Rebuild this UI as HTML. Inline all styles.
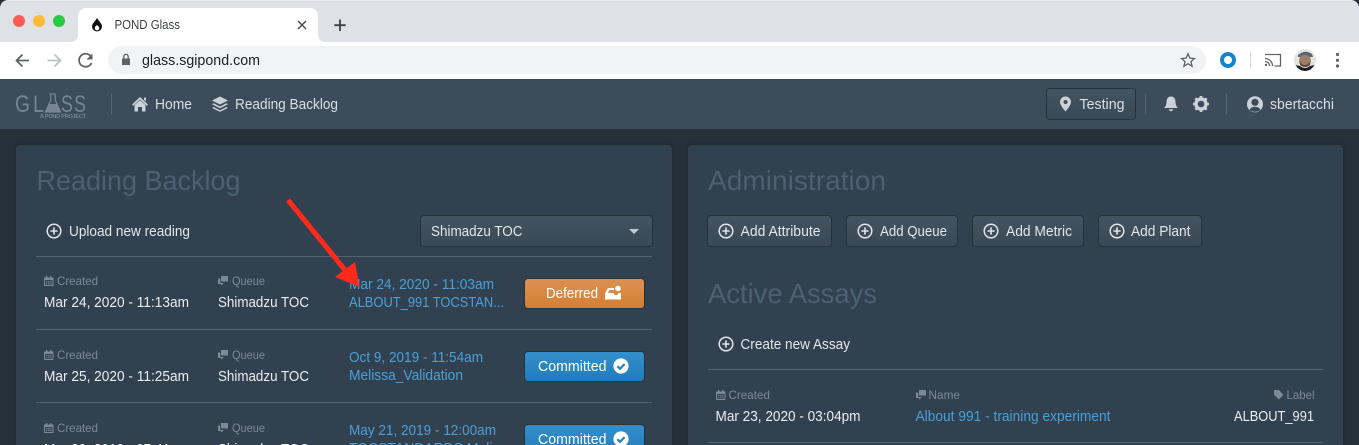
<!DOCTYPE html>
<html><head><meta charset="utf-8"><title>POND Glass</title>
<style>
html,body{margin:0;padding:0;width:1359px;height:445px;overflow:hidden;background:#27313a}
#page{position:relative;width:1359px;height:445px;overflow:hidden;background:#27313a}
#page div{position:absolute;box-sizing:border-box}
svg{position:absolute;left:0;top:0}
text{font-family:"Liberation Sans",sans-serif;font-size:14.3px}
.n{fill:#d9dfe3}.w{fill:#e9edf0}.l{fill:#7d8a95;font-size:12px}.a{fill:#4a9fd8}
.h{fill:#4a6073;font-size:28px}.b{fill:#e2e7ea}
.btn{background:linear-gradient(#43535f,#3a4956);border:1px solid #27323b;border-radius:4px}
</style></head><body><div id="page">
<div style="left:0;top:0;width:1359px;height:42px;background:#dee1e6;border-radius:8px 8px 0 0;border-top:1px solid #e9ebee"></div>
<div style="left:0;top:42px;width:1359px;height:37px;background:#fff"></div>
<div style="left:108px;top:46px;width:1098px;height:28px;background:#f1f3f4;border-radius:14px"></div>
<div style="left:78px;top:8px;width:240px;height:35px;background:#fff;border-radius:8px 8px 0 0"></div>
<div style="left:0;top:79px;width:1359px;height:51px;background:#3c4c5a;border-bottom:1px solid #252f37"></div>
<div style="left:1046px;top:88px;width:90px;height:32px" class="btn"></div>
<div style="left:16px;top:145px;width:656px;height:300px;background:#32414f;border-radius:4px 4px 0 0;box-shadow:0 0 3px #1d252c"></div>
<div style="left:688px;top:145px;width:655px;height:300px;background:#32414f;border-radius:4px 4px 0 0;box-shadow:0 0 3px #1d252c"></div>
<div style="left:420px;top:215px;width:233px;height:32px" class="btn"></div>
<div style="left:707px;top:215px;width:125px;height:32px" class="btn"></div>
<div style="left:846px;top:215px;width:112px;height:32px" class="btn"></div>
<div style="left:972px;top:215px;width:112px;height:32px" class="btn"></div>
<div style="left:1098px;top:215px;width:104px;height:32px" class="btn"></div>
<div style="left:524px;top:278px;width:121px;height:31px;background:linear-gradient(#dd9150,#d47f34);border:1px solid #27323b;border-radius:4px"></div>
<div style="left:524px;top:351px;width:121px;height:31px;background:linear-gradient(#3490cc,#217cb9);border:1px solid #27323b;border-radius:4px"></div>
<div style="left:524px;top:424px;width:121px;height:31px;background:linear-gradient(#3490cc,#217cb9);border:1px solid #27323b;border-radius:4px"></div>

<svg width="1359" height="445" viewBox="0 0 1359 445">
<defs>
<g id="plus"><circle r="6.8" fill="none" stroke="#dfe4e8" stroke-width="1.5"/><path d="M-3.6 0H3.6M0-3.6V3.6" stroke="#dfe4e8" stroke-width="1.6"/></g>
<g id="cal" fill="#7d8a95"><path d="M0 1.5H9.5V10H0ZM1 4V9H8.5V4Z" fill-rule="evenodd"/><path d="M2 0h1.4v2H2zM6.1 0h1.4v2H6.1zM2 5h1.3v1.2H2zM4.1 5h1.3v1.2H4.1zM6.2 5h1.3v1.2H6.2zM2 7h1.3v1.2H2zM4.1 7h1.3v1.2H4.1zM6.2 7h1.3v1.2H6.2z"/></g>
<g id="q" fill="#7d8a95"><path d="M3 0H10V5.5H3Z"/><path d="M0 2.5H2.2V7H6L3 9.6V8H0Z"/></g>
<g id="chk"><circle r="7.6" fill="#fff"/><path d="M-3.6 0.2L-1 2.8L3.6-1.9" fill="none" stroke="#2584c2" stroke-width="2.2"/></g>
</defs>

<!-- window controls -->
<circle cx="19" cy="21" r="6" fill="#fc5b57"/><circle cx="39" cy="21" r="6" fill="#fdbb33"/><circle cx="59" cy="21" r="6" fill="#2ac940"/>
<path d="M70 42Q78 42 78 34V42ZM326 42Q318 42 318 34V42Z" fill="#fff"/>
<path d="M97 18C99 21.5 102 23.5 102 26.5A5 5 0 0 1 92 26.5C92 23.5 95 21.5 97 18Z" fill="#111"/><path d="M97 25C98 26.200 99.400 26.800 99.200 28.200A2.200 2.200 0 0 1 94.800 28.200C94.600 26.800 96 26.200 97 25Z" fill="#fff"/>
<text x="114.500" y="29" fill="#3c4043" textLength="65.500" lengthAdjust="spacingAndGlyphs" style="font-size:12.500px">POND Glass</text>
<path d="M298 21L306 29M306 21L298 29" stroke="#45494e" stroke-width="1.400"/>
<path d="M340 19.500V31M334.300 25.200H345.700" stroke="#3c4043" stroke-width="1.800"/>
<path d="M29 60.500H17M22.500 54.500L16.500 60.500L22.500 66.500" fill="none" stroke="#5f6368" stroke-width="1.800"/>
<path d="M47.500 60.500H60M54.500 54.500L60.500 60.500L54.500 66.500" fill="none" stroke="#bdc1c6" stroke-width="1.800"/>
<path d="M91.500 63A6.500 6.500 0 1 1 90.500 56" fill="none" stroke="#5f6368" stroke-width="1.800"/><path d="M92.500 53.500V59.500H86.500Z" fill="#5f6368"/>
<path d="M122 58.500H130V65H122Z" fill="#5f6368"/><path d="M123.800 58.500V56.500A2.200 2.200 0 0 1 128.200 56.500V58.500" fill="none" stroke="#5f6368" stroke-width="1.300"/>
<text x="142" y="65" fill="#202124" textLength="118" lengthAdjust="spacingAndGlyphs">glass.sgipond.com</text>
<path d="M1188 53.800L1189.900 58.100L1194.500 58.500L1191 61.600L1192.100 66.200L1188 63.700L1183.900 66.200L1185 61.600L1181.500 58.500L1186.100 58.100Z" fill="none" stroke="#5f6368" stroke-width="1.300"/>
<circle cx="1228" cy="60" r="6" fill="none" stroke="#1484cb" stroke-width="4"/>
<path d="M1250.500 52V68" stroke="#d5d7da"/>
<path d="M1265 54.500H1280.500V66H1274.500" fill="none" stroke="#5f6368" stroke-width="1.300"/><path d="M1265 58.500A7.500 7.500 0 0 1 1272.500 66M1265 61.500A4.500 4.500 0 0 1 1269.500 66" fill="none" stroke="#5f6368" stroke-width="1.300"/><circle cx="1266" cy="65" r="1.200" fill="#5f6368"/>
<circle cx="1305" cy="60" r="11" fill="#e7e5e0"/>
<path d="M1298 55Q1305 49 1312 54L1313 57H1298Z" fill="#5a6675"/>
<ellipse cx="1305" cy="61" rx="6" ry="6" fill="#a07f68"/><path d="M1300 62Q1305 68 1310 62L1310 65Q1305 69 1300 65Z" fill="#5c4a3e"/>
<path d="M1295.500 65L1300 66Q1305 70 1310 66L1314.500 65Q1311 71 1305 71Q1299 71 1295.500 65Z" fill="#1d1d1d"/>
<circle cx="1337.500" cy="54.500" r="1.600" fill="#5f6368"/><circle cx="1337.500" cy="60.300" r="1.600" fill="#5f6368"/><circle cx="1337.500" cy="66" r="1.600" fill="#5f6368"/>

<!-- nav -->
<g fill="#768591" style="font-size:24px">
<text x="15" y="112" fill="#768591" textLength="15" lengthAdjust="spacingAndGlyphs" style="font-size:24px">G</text>
<text x="33" y="112" fill="#768591" textLength="11" lengthAdjust="spacingAndGlyphs" style="font-size:24px">L</text>
<text x="61" y="112" fill="#768591" textLength="12" lengthAdjust="spacingAndGlyphs" style="font-size:24px">S</text>
<text x="74" y="112" fill="#768591" textLength="12" lengthAdjust="spacingAndGlyphs" style="font-size:24px">S</text>
</g>
<path d="M49.500 94H55.500M50.800 94.500V100L45.500 112H60.500L55.200 100V94.500" fill="none" stroke="#768591" stroke-width="1.300"/><path d="M49.500 104H56.500L60.500 112H45.500Z" fill="#768591"/>
<text x="40" y="118" fill="#768591" textLength="46" lengthAdjust="spacing" style="font-size:5.500px;font-weight:bold">A POND PROJECT</text>
<path d="M111.500 94V114" stroke="#566672"/>
<path d="M132 104.500L140 97L148 104.500L146.800 105.800L140 99.500L133.200 105.800Z" fill="#c9d2d9"/><path d="M134.500 105L140 100.300L145.500 105V111.500H142V107H138V111.500H134.500Z" fill="#c9d2d9"/><path d="M144 97.500H146V101.500L144 99.800Z" fill="#c9d2d9"/>
<text x="155" y="109" class="n" textLength="37" lengthAdjust="spacingAndGlyphs">Home</text>
<path d="M220 96.500L228 100.500L220 104.500L212 100.500Z" fill="#c9d2d9"/><path d="M213.500 103.300L220 106.500L226.500 103.300L228 104.200L220 108.200L212 104.200Z" fill="#c9d2d9"/><path d="M213.500 107L220 110.200L226.500 107L228 107.900L220 111.900L212 107.900Z" fill="#c9d2d9"/>
<text x="235" y="109" class="n" textLength="103" lengthAdjust="spacingAndGlyphs">Reading Backlog</text>
<path d="M1065.500 96.500A5.500 5.500 0 0 0 1060 102C1060 105.500 1065.500 111.500 1065.500 111.500C1065.500 111.500 1071 105.500 1071 102A5.500 5.500 0 0 0 1065.500 96.500ZM1065.500 100A2 2 0 1 1 1065.500 104A2 2 0 0 1 1065.500 100Z" fill="#c9d2d9" fill-rule="evenodd"/>
<text x="1079.500" y="109" class="n" textLength="45" lengthAdjust="spacingAndGlyphs">Testing</text>
<path d="M1145.500 94V114M1226.500 94V114" stroke="#566672"/>
<path d="M1171 96.500C1174.500 96.500 1175.500 99.500 1175.500 102C1175.500 105 1177 107 1178 108H1164C1165 107 1166.500 105 1166.500 102C1166.500 99.500 1167.500 96.500 1171 96.500Z" fill="#c9d2d9"/><path d="M1168.800 109.300H1173.200Q1172.500 111.300 1171 111.300Q1169.500 111.300 1168.800 109.300Z" fill="#c9d2d9"/>
<circle cx="1201" cy="104" r="5" fill="none" stroke="#c9d2d9" stroke-width="3.400"/><path d="M1201 96V112M1193 104H1209M1195.300 98.300L1206.700 109.700M1206.700 98.300L1195.300 109.700" stroke="#c9d2d9" stroke-width="2.600" stroke-dasharray="2.600 10.800"/>
<circle cx="1255" cy="104.300" r="8" fill="#c9d2d9"/><circle cx="1255" cy="102.300" r="3.600" fill="#3c4c5a"/><path d="M1249.500 110.300Q1250.500 106.800 1255 106.800Q1259.500 106.800 1260.500 110.300Q1255 113.500 1249.500 110.300Z" fill="#3c4c5a"/>
<text x="1270" y="109" class="n" textLength="64" lengthAdjust="spacingAndGlyphs">sbertacchi</text>

<!-- left panel -->
<text x="36.500" y="190" class="h" textLength="204" lengthAdjust="spacingAndGlyphs">Reading Backlog</text>
<use href="#plus" x="54" y="231"/>
<text x="69" y="236" class="b" textLength="121" lengthAdjust="spacingAndGlyphs">Upload new reading</text>
<text x="431" y="236" class="b" textLength="91.500" lengthAdjust="spacingAndGlyphs">Shimadzu TOC</text>
<path d="M629 229H639L634 234Z" fill="#c3ccd3"/>
<path d="M36 256.500H652M36 329.500H652M36 402.500H652" stroke="#54636f"/>

<use href="#cal" x="44" y="276"/><text x="57" y="285" class="l" textLength="41" lengthAdjust="spacingAndGlyphs">Created</text>
<use href="#q" x="218" y="276"/><text x="232" y="285" class="l" textLength="33" lengthAdjust="spacingAndGlyphs">Queue</text>
<text x="44" y="307" class="w" textLength="145" lengthAdjust="spacingAndGlyphs">Mar 24, 2020 - 11:13am</text>
<text x="218" y="307" class="w" textLength="91" lengthAdjust="spacingAndGlyphs">Shimadzu TOC</text>
<text x="349" y="289" class="a" textLength="145" lengthAdjust="spacingAndGlyphs">Mar 24, 2020 - 11:03am</text>
<text x="349" y="307" class="a" textLength="155" lengthAdjust="spacingAndGlyphs">ALBOUT_991 TOCSTAN...</text>
<text x="546" y="298" style="fill:#fff" textLength="52" lengthAdjust="spacingAndGlyphs">Deferred</text>
<path d="M605 299.500V293.500L608 288H614V290H609.500L608 293H613.500L614.500 295H617.500L618.500 293H621V299.500Z" fill="#fff"/><circle cx="618" cy="288.500" r="2.800" fill="#fff"/>

<use href="#cal" x="44" y="350"/><text x="57" y="359" class="l" textLength="41" lengthAdjust="spacingAndGlyphs">Created</text>
<use href="#q" x="218" y="350"/><text x="232" y="359" class="l" textLength="33" lengthAdjust="spacingAndGlyphs">Queue</text>
<text x="44" y="381" class="w" textLength="145" lengthAdjust="spacingAndGlyphs">Mar 25, 2020 - 11:25am</text>
<text x="218" y="381" class="w" textLength="91" lengthAdjust="spacingAndGlyphs">Shimadzu TOC</text>
<text x="349" y="362" class="a" textLength="134" lengthAdjust="spacingAndGlyphs">Oct 9, 2019 - 11:54am</text>
<text x="349" y="380" class="a" textLength="114" lengthAdjust="spacingAndGlyphs">Melissa_Validation</text>
<text x="538" y="371" style="fill:#fff" textLength="68.500" lengthAdjust="spacingAndGlyphs">Committed</text>
<use href="#chk" x="621" y="366"/>

<use href="#cal" x="44" y="423"/><text x="57" y="432" class="l" textLength="41" lengthAdjust="spacingAndGlyphs">Created</text>
<use href="#q" x="218" y="423"/><text x="232" y="432" class="l" textLength="33" lengthAdjust="spacingAndGlyphs">Queue</text>
<text x="44" y="454" class="w" textLength="145" lengthAdjust="spacingAndGlyphs">Mar 29, 2019 - 07:41am</text>
<text x="218" y="454" class="w" textLength="91" lengthAdjust="spacingAndGlyphs">Shimadzu TOC</text>
<text x="349" y="435" class="a" textLength="147" lengthAdjust="spacingAndGlyphs">May 21, 2019 - 12:00am</text>
<text x="349" y="453" class="a" textLength="155" lengthAdjust="spacingAndGlyphs">TOCSTANDARDS Meli...</text>
<text x="538" y="444" style="fill:#fff" textLength="68.500" lengthAdjust="spacingAndGlyphs">Committed</text>
<use href="#chk" x="621" y="439"/>

<!-- right panel -->
<text x="708" y="190" class="h" textLength="178" lengthAdjust="spacingAndGlyphs">Administration</text>
<use href="#plus" x="726" y="231"/><text x="740.500" y="236" class="b" textLength="80" lengthAdjust="spacingAndGlyphs">Add Attribute</text>
<use href="#plus" x="865" y="231"/><text x="880" y="236" class="b" textLength="67" lengthAdjust="spacingAndGlyphs">Add Queue</text>
<use href="#plus" x="991" y="231"/><text x="1006" y="236" class="b" textLength="66" lengthAdjust="spacingAndGlyphs">Add Metric</text>
<use href="#plus" x="1117" y="231"/><text x="1131" y="236" class="b" textLength="59.500" lengthAdjust="spacingAndGlyphs">Add Plant</text>
<text x="708" y="303" class="h" textLength="169" lengthAdjust="spacingAndGlyphs">Active Assays</text>
<use href="#plus" x="726" y="344"/><text x="740.500" y="349" class="b" textLength="109.500" lengthAdjust="spacingAndGlyphs">Create new Assay</text>
<path d="M708 369.500H1323M708 442.500H1323" stroke="#54636f"/>
<use href="#cal" x="716" y="390"/><text x="728.500" y="399" class="l" textLength="41.500" lengthAdjust="spacingAndGlyphs">Created</text>
<use href="#q" x="916" y="390"/><text x="928.500" y="399" class="l" textLength="31.500" lengthAdjust="spacingAndGlyphs">Name</text>
<path d="M1274 390H1279L1283.500 394.800L1279 399.500L1274 394.800Z" fill="#7d8a95"/><text x="1286.500" y="399" class="l" textLength="28" lengthAdjust="spacingAndGlyphs">Label</text>
<text x="715.500" y="421" class="w" textLength="145" lengthAdjust="spacingAndGlyphs">Mar 23, 2020 - 03:04pm</text>
<text x="915.500" y="421" class="a" textLength="195" lengthAdjust="spacingAndGlyphs">Albout 991 - training experiment</text>
<text x="1234" y="421" class="w" textLength="80" lengthAdjust="spacingAndGlyphs">ALBOUT_991</text>

<!-- annotation arrow -->
<path d="M288 200L345 270" stroke="#ff2a1c" stroke-width="5"/>
<path d="M335 277L355 262L359.500 287Z" fill="#ff2a1c"/>
</svg>
</div></body></html>
